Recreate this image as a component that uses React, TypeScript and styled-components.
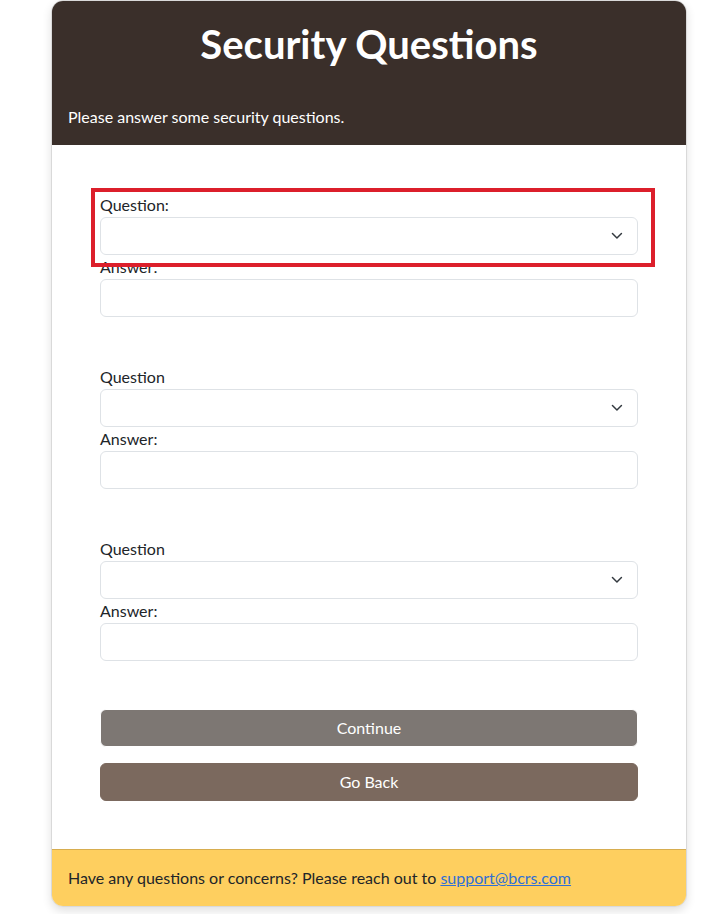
import React from "react";
import styled, { createGlobalStyle } from "styled-components";

const Global = createGlobalStyle`
  * { box-sizing: border-box; }
  html, body { margin: 0; padding: 0; background: #ffffff; }
  body {
    font-family: "Lato", "Open Sans", sans-serif;
    font-size: 16px;
    line-height: 1.5;
    color: #212529;
  }
`;

const Page = styled.div`
  padding: 0 33px 8px 51px;
`;

const Card = styled.div`
  width: 636px;
  background: #ffffff;
  border: 1px solid #d9d9d9;
  border-radius: 12px;
  overflow: hidden;
  box-shadow: 0 4px 10px rgba(0, 0, 0, 0.12);
`;

const Header = styled.div`
  background: #3a2f2a;
  color: #ffffff;
  padding: 19px 16px 16px;
`;

const Title = styled.h1`
  margin: 0 0 37px;
  text-align: center;
  font-size: 40px;
  font-weight: 700;
  line-height: 48px;
`;

const Subtitle = styled.p`
  margin: 0;
  font-size: 16px;
  line-height: 24px;
`;

const Body = styled.div`
  padding: 48px;
  display: flex;
  flex-direction: column;
  gap: 48px;
`;

const Group = styled.div<{ $flagged?: boolean }>`
  position: relative;
  display: flex;
  flex-direction: column;
  ${(p) =>
    p.$flagged &&
    `
    &::after {
      content: "";
      position: absolute;
      left: -9px;
      right: -17px;
      top: -5px;
      bottom: -12px;
      border: 4px solid #dc1f2b;
      pointer-events: none;
    }
  `}
`;

const Label = styled.label`
  font-size: 16px;
  line-height: 24px;
  color: #212529;
`;

const Select = styled.div`
  height: 38px;
  border: 1px solid #dee2e6;
  border-radius: 6px;
  background: #ffffff;
  display: flex;
  align-items: center;
  justify-content: flex-end;
  padding-right: 12px;
  color: #343a40;
`;

const Input = styled.div`
  height: 38px;
  border: 1px solid #dee2e6;
  border-radius: 6px;
  background: #ffffff;
`;

const Buttons = styled.div`
  display: flex;
  flex-direction: column;
  gap: 16px;
`;

const Button = styled.button<{ $variant: "continue" | "back" }>`
  font-family: inherit;
  font-size: 16px;
  line-height: 24px;
  color: #ffffff;
  border-radius: 6px;
  width: 100%;
  height: 38px;
  cursor: pointer;
  ${(p) =>
    p.$variant === "continue"
      ? `
    background: #7d7773;
    border: 1px solid #ffffff;
    padding: 5px 12px;
  `
      : `
    background: #7b695e;
    border: 1px solid #7b695e;
    padding: 6px 12px;
  `}
`;

const Footer = styled.div`
  background: #fecf5f;
  border-top: 1px solid #d7ad4f;
  padding: 16px;
  font-size: 16px;
  line-height: 24px;
  color: #212529;
`;

const Link = styled.a`
  color: #2f6fd6;
  text-decoration: underline;
`;

const Chevron = () => (
  <svg width="16" height="12" viewBox="0 0 16 12" fill="none">
    <path d="m2 3 6 6 6-6" stroke="#343a40" strokeWidth="2" strokeLinecap="round" strokeLinejoin="round" transform="scale(0.75) translate(2.6 1.6)" />
  </svg>
);

const questions = [
  { label: "Question:", flagged: true },
  { label: "Question", flagged: false },
  { label: "Question", flagged: false },
];

export default function App() {
  return (
    <>
      <Global />
      <Page>
        <Card>
          <Header>
            <Title>Security Questions</Title>
            <Subtitle>Please answer some security questions.</Subtitle>
          </Header>
          <Body>
            {questions.map((q, i) => (
              <Group key={i}>
                <Group $flagged={q.flagged}>
                  <Label>{q.label}</Label>
                  <Select>
                    <Chevron />
                  </Select>
                </Group>
                <Label>Answer:</Label>
                <Input />
              </Group>
            ))}
            <Buttons>
              <Button $variant="continue">Continue</Button>
              <Button $variant="back">Go Back</Button>
            </Buttons>
          </Body>
          <Footer>
            Have any questions or concerns? Please reach out to{" "}
            <Link href="#">support@bcrs.com</Link>
          </Footer>
        </Card>
      </Page>
    </>
  );
}
